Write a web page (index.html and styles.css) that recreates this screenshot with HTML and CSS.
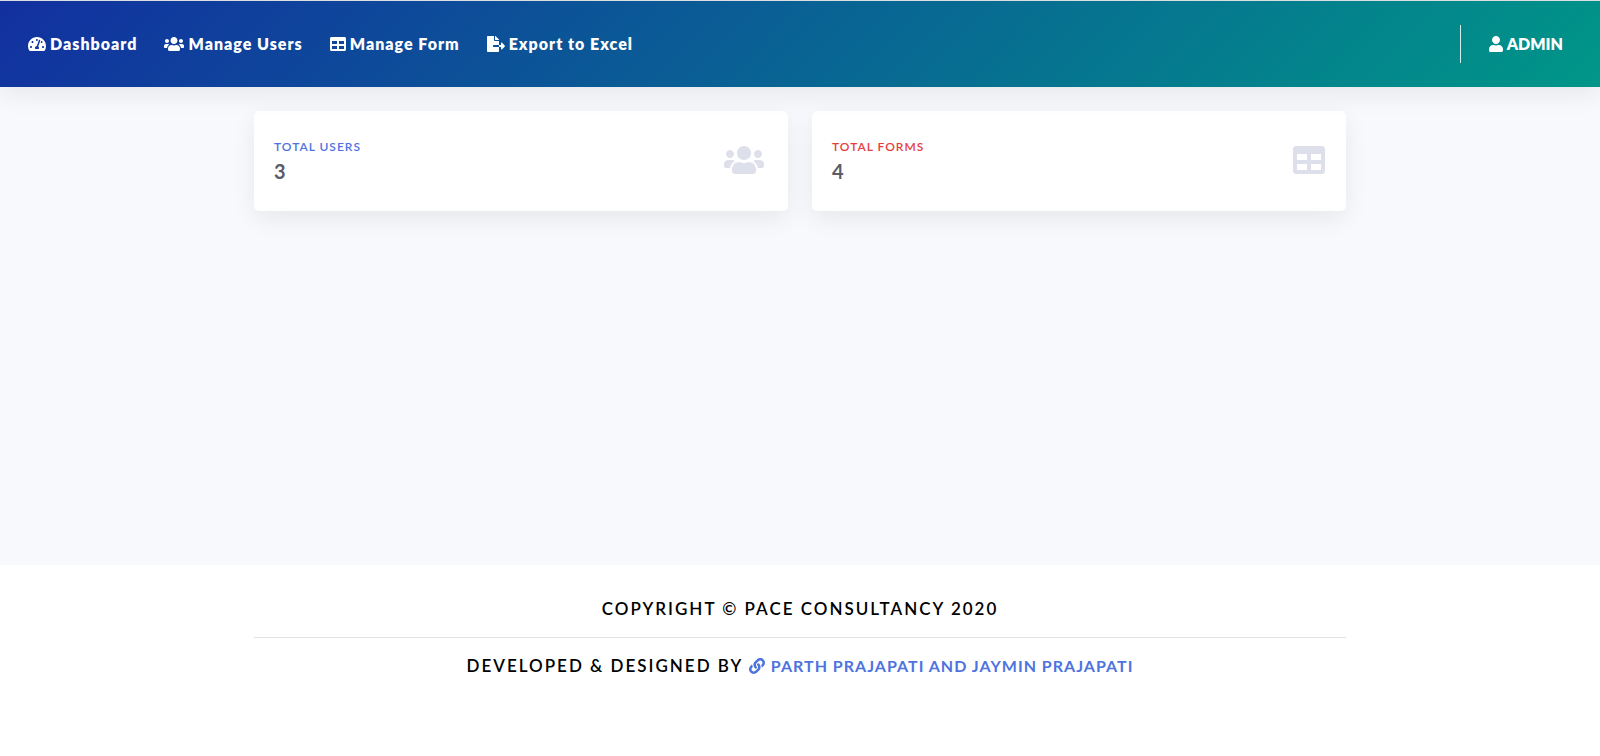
FILE: index.html
```html
<!DOCTYPE html>
<html lang="en">
<head>
<meta charset="utf-8">
<meta name="viewport" content="width=device-width, initial-scale=1">
<title>Dashboard</title>
<link rel="stylesheet" href="styles.css">
</head>
<body>
<svg class="sprite" aria-hidden="true">
  <symbol id="gauge" viewBox="0 0 576 512"><path d="M288 32C128.94 32 0 160.94 0 320c0 52.8 14.25 102.26 39.06 144.8 5.61 9.62 16.3 15.2 27.44 15.2h443c11.14 0 21.83-5.58 27.44-15.2C561.75 422.26 576 372.8 576 320c0-159.06-128.94-288-288-288zm0 64c14.71 0 26.58 10.13 30.32 23.65-1.11 2.26-2.64 4.23-3.45 6.67l-9.22 27.67c-5.13 3.49-10.97 6.01-17.64 6.01-17.67 0-32-14.33-32-32S270.33 96 288 96zM96 384c-17.67 0-32-14.33-32-32s14.33-32 32-32 32 14.33 32 32-14.33 32-32 32zm48-160c-17.67 0-32-14.33-32-32s14.33-32 32-32 32 14.33 32 32-14.33 32-32 32zm246.77-72.41l-61.33 184C343.13 347.33 352 364.54 352 384c0 11.72-3.38 22.55-8.88 32H232.88c-5.5-9.45-8.88-20.28-8.88-32 0-33.94 26.5-61.43 59.9-63.59l61.34-184.01c4.17-12.56 17.73-19.45 30.36-15.17 12.57 4.19 19.35 17.79 15.17 30.36zm14.66 57.2l15.52-46.55c3.47-1.29 7.13-2.23 11.05-2.23 17.67 0 32 14.33 32 32s-14.33 32-32 32c-11.38-.01-20.89-6.28-26.57-15.22zM480 384c-17.67 0-32-14.33-32-32s14.33-32 32-32 32 14.33 32 32-14.33 32-32 32z"/></symbol>
  <symbol id="users" viewBox="0 0 640 512"><path d="M96 224c35.3 0 64-28.7 64-64s-28.7-64-64-64-64 28.7-64 64 28.7 64 64 64zm448 0c35.3 0 64-28.7 64-64s-28.7-64-64-64-64 28.7-64 64 28.7 64 64 64zm32 32h-64c-17.6 0-33.5 7.1-45.1 18.6 40.3 22.1 68.9 62 75.1 109.4h66c17.7 0 32-14.3 32-32v-32c0-35.3-28.7-64-64-64zm-256 0c61.9 0 112-50.1 112-112S381.9 32 320 32 208 82.1 208 144s50.1 112 112 112zm76.8 32h-8.3c-20.8 10-43.9 16-68.5 16s-47.6-6-68.5-16h-8.3C179.6 288 128 339.6 128 403.2V432c0 26.5 21.5 48 48 48h288c26.5 0 48-21.5 48-48v-28.8c0-63.6-51.6-115.2-115.2-115.2zm-223.7-13.4C161.5 263.1 145.6 256 128 256H64c-35.3 0-64 28.7-64 64v32c0 17.7 14.3 32 32 32h65.9c6.3-47.4 34.9-87.3 75.2-109.4z"/></symbol>
  <symbol id="table" viewBox="0 0 512 512"><path d="M464 32H48C21.49 32 0 53.49 0 80v352c0 26.51 21.49 48 48 48h416c26.51 0 48-21.49 48-48V80c0-26.51-21.49-48-48-48zM224 416H64v-96h160v96zm0-160H64v-96h160v96zm224 160H288v-96h160v96zm0-160H288v-96h160v96z"/></symbol>
  <symbol id="export" viewBox="0 0 576 512"><path d="M384 121.9c0-6.3-2.5-12.4-7-16.9L279.1 7c-4.5-4.5-10.6-7-17-7H256v128h128zM571 308l-95.7-96.4c-10.1-10.1-27.4-3-27.4 11.3V288h-64v64h64v65.2c0 14.3 17.3 21.4 27.4 11.3L571 332c6.6-6.6 6.6-17.4 0-24zm-379 28v-32c0-8.8 7.2-16 16-16h176V160H248c-13.2 0-24-10.8-24-24V0H24C10.7 0 0 10.7 0 24v464c0 13.3 10.7 24 24 24h336c13.3 0 24-10.7 24-24V352H208c-8.8 0-16-7.2-16-16z"/></symbol>
  <symbol id="user" viewBox="0 0 448 512"><path d="M224 256c70.7 0 128-57.3 128-128S294.7 0 224 0 96 57.3 96 128s57.3 128 128 128zm89.6 32h-16.7c-22.2 10.2-46.9 16-72.9 16s-50.6-5.8-72.9-16h-16.7C60.2 288 0 348.2 0 422.4V464c0 26.5 21.5 48 48 48h352c26.5 0 48-21.5 48-48v-41.6c0-74.2-60.2-134.4-134.4-134.4z"/></symbol>
  <symbol id="link" viewBox="0 0 512 512"><path d="M326.612 185.391c59.747 59.809 58.927 155.698.36 214.59-.11.12-.24.25-.36.37l-67.2 67.2c-59.27 59.27-155.699 59.262-214.96 0-59.27-59.26-59.27-155.7 0-214.96l37.106-37.106c9.84-9.84 26.786-3.3 27.294 10.606.648 17.722 3.826 35.527 9.69 52.721 1.986 5.822.567 12.262-3.783 16.612l-13.087 13.087c-28.026 28.026-28.905 73.66-1.155 101.96 28.024 28.579 74.086 28.749 102.325.51l67.2-67.19c28.191-28.191 28.073-73.757 0-101.83-3.701-3.694-7.429-6.564-10.341-8.569a16.037 16.037 0 0 1-6.947-12.606c-.396-10.567 3.348-21.456 11.698-29.806l21.054-21.055c5.521-5.521 14.182-6.199 20.584-1.731a152.482 152.482 0 0 1 20.522 17.197zM467.547 44.449c-59.261-59.262-155.69-59.27-214.96 0l-67.2 67.2c-.12.12-.25.25-.36.37-58.566 58.892-59.387 154.781.36 214.59a152.454 152.454 0 0 0 20.521 17.196c6.402 4.468 15.064 3.789 20.584-1.731l21.054-21.055c8.35-8.35 12.094-19.239 11.698-29.806a16.037 16.037 0 0 0-6.947-12.606c-2.912-2.005-6.64-4.875-10.341-8.569-28.073-28.073-28.191-73.639 0-101.83l67.2-67.19c28.239-28.239 74.3-28.069 102.325.51 27.75 28.3 26.872 73.934-1.155 101.96l-13.087 13.087c-4.35 4.35-5.769 10.79-3.783 16.612 5.864 17.194 9.042 34.999 9.69 52.721.509 13.906 17.454 20.446 27.294 10.606l37.106-37.106c59.271-59.259 59.271-155.699.001-214.959z"/></symbol>
</svg>

<nav class="topbar">
  <div class="topbar__menu">
    <a class="topbar__link" href="#"><svg class="icon icon--18"><use href="#gauge"/></svg>Dashboard</a>
    <a class="topbar__link" href="#"><svg class="icon icon--20"><use href="#users"/></svg>Manage Users</a>
    <a class="topbar__link" href="#"><svg class="icon"><use href="#table"/></svg>Manage Form</a>
    <a class="topbar__link" href="#"><svg class="icon icon--18"><use href="#export"/></svg>Export to Excel</a>
  </div>
  <div class="topbar__account">
    <a class="topbar__link" href="#"><svg class="icon icon--14"><use href="#user"/></svg>ADMIN</a>
  </div>
</nav>

<main class="content">
  <div class="container cards">
    <section class="card">
      <div>
        <h2 class="card__label card__label--blue">TOTAL USERS</h2>
        <p class="card__value">3</p>
      </div>
      <svg class="card__icon card__icon--wide"><use href="#users"/></svg>
    </section>
    <section class="card">
      <div>
        <h2 class="card__label card__label--red">TOTAL FORMS</h2>
        <p class="card__value">4</p>
      </div>
      <svg class="card__icon"><use href="#table"/></svg>
    </section>
  </div>
</main>

<footer class="footer">
  <div class="container">
    <p class="footer__text">COPYRIGHT © PACE CONSULTANCY 2020</p>
    <hr class="footer__rule">
    <p class="footer__text">DEVELOPED &amp; DESIGNED BY <a class="footer__link" href="#"><svg class="icon footer__icon"><use href="#link"/></svg>PARTH PRAJAPATI AND JAYMIN PRAJAPATI</a></p>
  </div>
</footer>
</body>
</html>
```

FILE: styles.css
```css
* {
  box-sizing: border-box;
}

body {
  margin: 0;
  min-height: 100vh;
  display: flex;
  flex-direction: column;
  background: #fff;
  border-top: 1px solid #dcdfe2;
  font-family: Lato, "Liberation Sans", sans-serif;
  font-size: 16px;
  line-height: 24px;
}

h2,
p {
  margin: 0;
}

a {
  text-decoration: none;
}

.sprite {
  position: absolute;
  width: 0;
  height: 0;
}

.icon {
  width: 16px;
  height: 16px;
  fill: currentColor;
}

.icon--14 {
  width: 14px;
}

.icon--18 {
  width: 18px;
}

.icon--20 {
  width: 20px;
}

.container {
  width: 100%;
  max-width: 1140px;
  margin: 0 auto;
  padding: 0 24px;
}

.topbar {
  position: relative;
  display: flex;
  align-items: center;
  justify-content: space-between;
  padding: 24px 37px 24px 28px;
  background: linear-gradient(135deg, #1230a0, #009688);
  box-shadow: 0 8px 24px rgba(0, 0, 0, 0.07);
}

.topbar__menu {
  display: flex;
  gap: 27px;
}

.topbar__link {
  display: flex;
  align-items: center;
  gap: 4px;
  color: #fff;
  font-weight: 800;
}

.topbar__menu .topbar__link {
  letter-spacing: 1px;
}

.topbar__account {
  padding: 7px 0 7px 28px;
  border-left: 1px solid #d5edeb;
}

.content {
  flex: 1;
  padding: 24px 0;
  background: #f8f9fd;
}

.cards {
  display: grid;
  grid-template-columns: 1fr 1fr;
  gap: 24px;
}

.card {
  display: flex;
  align-items: center;
  justify-content: space-between;
  padding: 24px 21px 26px 20px;
  background: #fff;
  border-radius: 5px;
  box-shadow: 0 8px 24px rgba(0, 0, 0, 0.07);
}

.card__label {
  font-size: 12px;
  font-weight: 600;
  line-height: 24px;
  letter-spacing: 1px;
}

.card__label--blue {
  color: #4e73df;
}

.card__label--red {
  color: #e53e3e;
}

.card__value {
  color: #5a5c69;
  font-size: 20px;
  font-weight: 700;
  line-height: 24px;
  padding-bottom: 2px;
}

.card__icon {
  width: 32px;
  height: 32px;
  fill: #dddfeb;
}

.card__icon--wide {
  width: 40px;
  margin-right: 3px;
}

.footer {
  padding: 32px 0 78px;
}

.footer__text {
  color: #000;
  text-align: center;
  font-size: 17px;
  font-weight: 600;
  letter-spacing: 2px;
}

.footer__rule {
  margin: 16px 0;
  border: 0;
  border-top: 1px solid #e3e3e5;
}

.footer__link {
  color: #4e73df;
  font-size: 16px;
  font-weight: 700;
  letter-spacing: 1px;
}

.footer__icon {
  margin-right: 6px;
  vertical-align: -2px;
}
```
